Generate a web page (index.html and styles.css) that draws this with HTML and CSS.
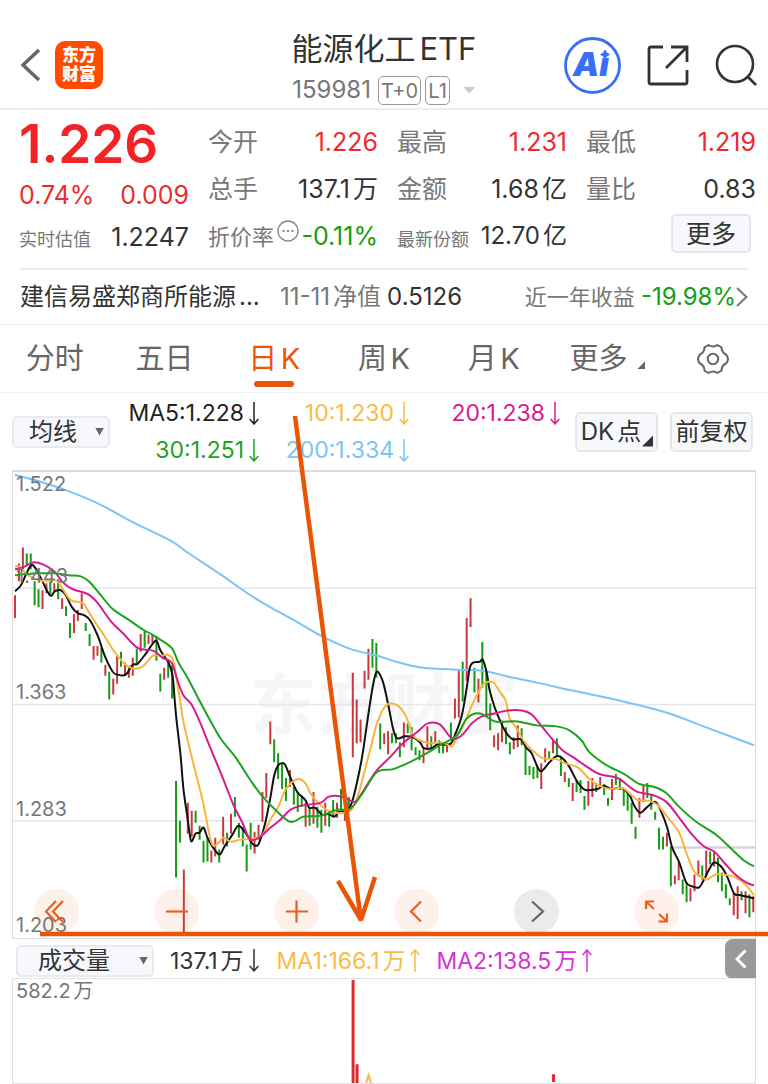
FILE: index.html
```html
<!DOCTYPE html>
<html lang="zh-CN">
<head>
  <meta charset="UTF-8" />
  <meta name="viewport" content="width=device-width, initial-scale=1" />
  <title>能源化工ETF 159981</title>
  <link rel="stylesheet" href="styles.css">
</head>
<body>
  <!-- Shared arrow shapes -->
  <svg class="defs" width="0" height="0" aria-hidden="true">
    <symbol id="down" viewBox="0 0 10 23"><path d="M5 0V22M0.700 17L5 22L9.300 17" /></symbol>
    <symbol id="up" viewBox="0 0 10 23"><path d="M5 23V1M0.700 6L5 1L9.300 6" /></symbol>
  </svg>

  <!-- Top bar -->
  <header class="topbar">
    <div class="topbar-left">
      <button class="icon-button" aria-label="返回">
        <svg width="20" height="34" viewBox="0 0 20 34"><path d="M18 2L2 17L18 32" fill="none" stroke="#666" stroke-width="3.500" /></svg>
      </button>
      <div class="logo"><span>东方</span><span>财富</span></div>
    </div>
    <div class="topbar-title">
      <h1>能源化工ETF</h1>
      <div class="code">
        <span>159981</span>
        <span class="badge">T+0</span>
        <span class="badge">L1</span>
        <i class="caret-light"></i>
      </div>
    </div>
    <div class="topbar-right">
      <button class="icon-button" aria-label="AI">
        <svg width="57" height="57" viewBox="0 0 57 57">
          <circle cx="28.500" cy="28.500" r="27" fill="#fff" stroke="#3a6df8" stroke-width="2.800" />
          <text class="ai-text" x="27" y="39" text-anchor="middle">Ai</text>
          <path d="M34.500 12H48V21H34.500Z" fill="#fff" />
          <path d="M41 13Q42 16.500 45.500 17.500Q42 18.500 41 22Q40 18.500 36.500 17.500Q40 16.500 41 13Z" fill="#3a6df8" stroke="#3a6df8" />
        </svg>
      </button>
      <button class="icon-button" aria-label="分享">
        <svg width="42" height="42" viewBox="0 0 42 42" fill="none" stroke="#333" stroke-width="2.800">
          <path d="M16 3H4Q2 3 2 5V38Q2 40 4 40H38Q40 40 40 38V26" />
          <path d="M24 3H40V18M39.500 3.500L19 24" />
        </svg>
      </button>
      <button class="icon-button" aria-label="搜索">
        <svg width="42" height="42" viewBox="0 0 42 42" fill="none" stroke="#333" stroke-width="2.600">
          <circle cx="20" cy="20" r="18" />
          <path d="M32 32L41 41" />
        </svg>
      </button>
    </div>
  </header>

  <!-- Quote -->
  <section class="quote">
    <div class="quote-col first">
      <div class="price">1.226</div>
      <div class="row change"><span class="num red">0.74%</span><span class="num red">0.009</span></div>
      <div class="row est"><span class="label small">实时估值</span><span class="num">1.2247</span></div>
    </div>
    <div class="quote-col">
      <div class="row"><span class="label">今开</span><span class="num red">1.226</span></div>
      <div class="row"><span class="label">总手</span><span class="num">137.1万</span></div>
      <div class="row">
        <span class="label medium">折价率</span>
        <svg class="info" width="22" height="22" viewBox="0 0 22 22"><circle cx="11" cy="11" r="10" fill="none" stroke="#888" stroke-width="1.400" /><path d="M5.500 11h2M10 11h2M14.500 11h2" stroke="#888" stroke-width="2" /></svg>
        <span class="num green">-0.11%</span>
      </div>
    </div>
    <div class="quote-col">
      <div class="row"><span class="label">最高</span><span class="num red">1.231</span></div>
      <div class="row"><span class="label">金额</span><span class="num">1.68亿</span></div>
      <div class="row"><span class="label small">最新份额</span><span class="num share">12.70亿</span></div>
    </div>
    <div class="quote-col">
      <div class="row"><span class="label">最低</span><span class="num red">1.219</span></div>
      <div class="row"><span class="label">量比</span><span class="num">0.83</span></div>
      <div class="row more-row"><button class="box-button more">更多</button></div>
    </div>
  </section>

  <!-- Linked fund -->
  <a class="fund" href="#">
    <span class="fund-name">建信易盛郑商所能源...</span>
    <span class="fund-label nav">11-11净值</span>
    <span class="fund-value">0.5126</span>
    <span class="fund-label year">近一年收益</span>
    <span class="fund-value green">-19.98%</span>
    <svg width="12" height="20" viewBox="0 0 12 20"><path d="M1 1L10.500 10L1 19" fill="none" stroke="#777" stroke-width="2" /></svg>
  </a>

  <!-- Period tabs -->
  <nav class="tabs">
    <a href="#">分时</a>
    <a href="#">五日</a>
    <a href="#" class="active">日K</a>
    <a href="#">周K</a>
    <a href="#">月K</a>
    <a href="#">更多<i class="corner"></i></a>
    <button class="icon-button" aria-label="设置">
      <svg width="34" height="32" viewBox="0 0 34 32" fill="none" stroke="#666" stroke-width="2">
        <path d="M12.500 2Q17 5 21.500 2L25.500 4.300Q25.500 9.500 30 11.500Q34 16 30 20.500Q25.500 22.500 25.500 27.700L21.500 30Q17 27 12.500 30L8.500 27.700Q8.500 22.500 4 20.500Q0 16 4 11.500Q8.500 9.500 8.500 4.300Z" stroke-linejoin="round" />
        <circle cx="17" cy="16" r="5.200" />
      </svg>
    </button>
  </nav>

  <section class="kline">
    <!-- Moving averages -->
    <div class="ma-bar">
      <label class="picker">
        <select aria-label="指标"><option>均线</option></select>
      </label>
      <div class="ma-list">
        <span class="ma5">MA5:1.228<svg class="arrow"><use href="#down" /></svg></span>
        <span class="ma10">10:1.230<svg class="arrow"><use href="#down" /></svg></span>
        <span class="ma20">20:1.238<svg class="arrow"><use href="#down" /></svg></span>
        <span class="ma30">30:1.251<svg class="arrow"><use href="#down" /></svg></span>
        <span class="ma200">200:1.334<svg class="arrow"><use href="#down" /></svg></span>
      </div>
      <button class="box-button tool dk">DK点<i class="corner"></i></button>
      <button class="box-button tool">前复权</button>
    </div>

    <!-- Daily chart -->
    <div class="chart">
      <div class="watermark">东方财富</div>
      <svg class="plot" viewBox="0 0 744 469" preserveAspectRatio="none">
        <path d="M0 117H744M0 234H744M0 351H744" stroke="#e6e6ee" stroke-width="1.500" />
        <path d="M660 378H744" stroke="#d3d3da" stroke-width="2.500" />
        <g id="plot-data"></g>
      </svg>
      <div class="axis">
        <div><span>1.522</span><span>1.443</span></div>
        <div><span>1.363</span></div>
        <div><span>1.283</span></div>
        <div><span>1.203</span></div>
      </div>
      <div class="controls">
        <button aria-label="最左"><svg viewBox="0 0 45 45"><path d="M22 12L12 22.500L22 33M29 12L19 22.500L29 33" /></svg></button>
        <button aria-label="缩小"><svg viewBox="0 0 45 45"><path d="M12 22.500H34" /></svg></button>
        <button aria-label="放大"><svg viewBox="0 0 45 45"><path d="M12 22.500H34M22.500 11.500V33.500" /></svg></button>
        <button aria-label="左移"><svg viewBox="0 0 45 45"><path d="M27 12.500L17 22.500L27 32.500" /></svg></button>
        <button class="off" aria-label="右移"><svg viewBox="0 0 45 45"><path d="M18 12.500L29 22.500L18 32.500" /></svg></button>
        <button aria-label="全屏"><svg viewBox="0 0 45 45"><path d="M12 20V12.500H20M12.500 13L20 20M24.500 32.500H33V24.500M32.500 32L25 25" /></svg></button>
      </div>
    </div>

    <!-- Hand-drawn marks over the chart -->
    <svg class="marks" viewBox="0 0 768 560" preserveAspectRatio="none">
      <path d="M295 23L361 528M338 488L361 527L375 484M40 541H768" />
    </svg>
  </section>

  <!-- Volume -->
  <section class="volume">
    <div class="volume-bar">
      <label class="picker wide">
        <select aria-label="副图指标"><option>成交量</option></select>
      </label>
      <span class="vol-now">137.1万<svg class="arrow"><use href="#down" /></svg></span>
      <span class="ma10">MA1:166.1万<svg class="arrow"><use href="#up" /></svg></span>
      <span class="vol-ma2">MA2:138.5万<svg class="arrow"><use href="#up" /></svg></span>
      <button class="fold" aria-label="展开">
        <svg width="12" height="20" viewBox="0 0 12 20"><path d="M10.500 1.500L2 10L10.500 18.500" fill="none" stroke="#fff" stroke-width="3" /></svg>
      </button>
    </div>
    <div class="volume-chart">
      <span>582.2万</span>
      <svg class="plot" viewBox="0 0 744 106" preserveAspectRatio="none">
        <path d="M341 1V106M345 87V106M542 97V105" stroke="#e02a2e" stroke-width="3" />
        <path d="M354 106L356.500 98L359 106" fill="none" stroke="#f7bc45" stroke-width="2" />
      </svg>
    </div>
  </section>

  <script src="chart.js"></script>
</body>
</html>
```
FILE: styles.css
```css
/* Base */
* {
  box-sizing: border-box;
}

body {
  margin: 0;
  background: #ffffff;
  color: #333333;
  font-family: Inter, "Noto Sans CJK SC", sans-serif;
  line-height: 30px;
  text-autospace: normal;
}

button {
  font-family: inherit;
  color: inherit;
  text-autospace: inherit;
  cursor: pointer;
}

a {
  color: inherit;
  text-decoration: none;
}

svg {
  display: block;
}

.defs {
  position: absolute;
}

.red {
  color: #ee2a2e;
}

.green {
  color: #12a012;
}

/* Top bar */
.topbar {
  display: grid;
  grid-template-columns: 1fr auto 1fr;
  height: 110px;
  padding: 20px 11px 0;
  border-bottom: 2px solid #eeeeee;
}

.icon-button {
  border: none;
  background: none;
  padding: 0;
}

.topbar-left,
.topbar-right {
  display: flex;
  align-items: center;
}

.topbar-left {
  gap: 14px;
  padding-left: 10px;
}

.topbar-right {
  justify-content: flex-end;
  gap: 26px;
}

.logo {
  display: flex;
  flex-direction: column;
  align-items: center;
  justify-content: center;
  width: 48px;
  height: 48px;
  border-radius: 10px;
  background: #ff4a00;
  color: #ffffff;
  font-size: 17px;
  font-weight: 900;
  line-height: 19px;
}

.ai-text {
  font-size: 33px;
  font-weight: 900;
  font-style: italic;
  fill: #3a6df8;
}

.topbar-title {
  display: flex;
  flex-direction: column;
  align-items: center;
  padding-top: 7px;
}

h1 {
  margin: 0;
  font-size: 31px;
  font-weight: 400;
  line-height: 43px;
}

.code {
  display: flex;
  align-items: center;
  gap: 4px;
  height: 40px;
  color: #777777;
  font-size: 24px;
}

.badge {
  height: 29px;
  padding: 0 2px;
  border: 1px solid #999999;
  border-radius: 5px;
  font-size: 20px;
  line-height: 28px;
}

.code .badge:nth-child(2) {
  margin-left: 3px;
}

.caret-light {
  width: 13px;
  height: 7px;
  margin-left: 9px;
  background: #cccccc;
  clip-path: polygon(0 0, 100% 0, 50% 100%);
}

/* Quote */
.quote {
  display: grid;
  grid-template-columns: repeat(4, minmax(0, 1fr));
  gap: 19px;
  padding: 8px 12px 9px 19px;
}

.row {
  display: flex;
  align-items: center;
  justify-content: space-between;
  height: 47px;
  white-space: nowrap;
}

.price {
  height: 53px;
  color: #f22226;
  font-size: 53px;
  font-weight: 600;
  line-height: 53px;
}

.first .est {
  height: 41px;
}

.est .num {
  padding-bottom: 4px;
}

.label {
  color: #777777;
  font-size: 25px;
}

.label.medium {
  padding-top: 2px;
  font-size: 22px;
}

.label.small {
  padding-top: 2px;
  font-size: 18px;
}

.quote-col:nth-child(3) .small {
  padding-top: 8px;
}

.num {
  font-size: 25px;
}

.num.share {
  font-size: 24px;
}

.info {
  margin: 0 0 10px;
}

.box-button {
  border: 2px solid #e4e6eb;
  border-radius: 5px;
  background: #f6f8fb;
  padding: 0;
  font-size: 24px;
}

.more-row {
  justify-content: flex-end;
  align-items: flex-start;
  padding: 2px 5px 0 0;
}

.more {
  width: 80px;
  height: 39px;
  font-size: 25px;
  line-height: 30px;
}

/* Linked fund */
.fund {
  display: flex;
  align-items: center;
  height: 56px;
  padding: 0 0 1px;
  margin: 0 20px;
  border-top: 2px solid #eeeeee;
  white-space: nowrap;
}

.fund-name {
  width: 260px;
  font-size: 24px;
}

.fund-label {
  margin-right: 6px;
  color: #777777;
  font-size: 22px;
}

.fund-label.nav {
  font-size: 24px;
}

.fund-value {
  font-size: 24px;
}

.year {
  margin-left: auto;
}

/* Period tabs */
.tabs {
  display: grid;
  grid-template-columns: repeat(7, 1fr);
  height: 69px;
  border-top: 1px solid #eeeeee;
  border-bottom: 1px solid #f2f2f2;
  color: #666666;
  font-size: 29px;
  line-height: 67px;
  text-align: center;
}

.tabs .icon-button {
  display: flex;
  align-items: center;
  justify-content: center;
}

.tabs .active {
  position: relative;
  color: #e8560a;
}

.tabs .active::after {
  content: "";
  position: absolute;
  left: 50%;
  bottom: 5px;
  width: 40px;
  height: 6px;
  margin-left: -20px;
  border-radius: 3px;
  background: #e8560a;
}

.corner {
  display: inline-block;
  width: 8px;
  height: 8px;
  margin-left: 10px;
  background: currentColor;
  clip-path: polygon(100% 0, 100% 100%, 0 100%);
}

.tabs .corner {
  margin-right: -8px;
}

/* Moving averages */
.kline {
  position: relative;
}

.ma-bar {
  display: flex;
  align-items: center;
  height: 77px;
  padding: 0 15px 0 12px;
}

.picker {
  position: relative;
  width: 98px;
  height: 32px;
}

.picker select {
  width: 100%;
  height: 100%;
  padding: 0 0 0 15px;
  border: 2px solid #e8eaee;
  border-radius: 5px;
  background: #f6f8fb;
  color: #333333;
  font-family: inherit;
  font-size: 24px;
  line-height: 28px;
  appearance: none;
}

.picker::after {
  content: "";
  position: absolute;
  right: 6px;
  top: 12px;
  width: 9px;
  height: 8px;
  background: #666666;
  clip-path: polygon(0 0, 100% 0, 50% 100%);
}

.ma-list {
  flex: 1;
  display: grid;
  grid-template-columns: 149fr 150fr 151fr;
  margin-right: 15px;
  font-size: 23px;
  line-height: 37px;
}

.ma-list span,
.volume-bar span {
  display: flex;
  align-items: center;
  justify-content: flex-end;
  gap: 5px;
  white-space: nowrap;
}

.arrow {
  width: 10px;
  height: 23px;
  fill: none;
  stroke: currentColor;
  stroke-width: 1.5px;
}

.ma5 {
  color: #222222;
}

.ma10 {
  color: #f7bc45;
}

.ma20 {
  color: #d81b8c;
}

.ma30 {
  color: #1ea31e;
}

.ma200 {
  color: #7cc4f5;
}

.tool {
  width: 83px;
  height: 40px;
  line-height: 30px;
}

.dk {
  position: relative;
  padding-right: 11px;
  margin-right: 12px;
}

.dk .corner {
  position: absolute;
  right: 3px;
  bottom: 3px;
  width: 11px;
  height: 11px;
}

/* Daily chart */
.chart {
  position: relative;
  height: 469px;
  margin: 0 12px;
  border: 1px solid #dcdce4;
  border-top-width: 2px;
}

.plot {
  position: absolute;
  left: 0;
  top: 0;
  width: 100%;
  height: 100%;
  fill: none;
}

.watermark {
  display: flex;
  align-items: center;
  justify-content: center;
  height: 100%;
  color: #f6f6f7;
  font-size: 67px;
  font-weight: 700;
}

.axis {
  position: absolute;
  inset: 0;
  display: grid;
  grid-template-rows: repeat(4, 1fr);
  padding-left: 3px;
  color: #777777;
  font-size: 20px;
  line-height: 25px;
}

.axis div {
  display: flex;
  flex-direction: column;
  justify-content: flex-end;
}

.axis div:first-child {
  justify-content: space-between;
}

.controls {
  position: absolute;
  left: 21px;
  right: 76px;
  bottom: 4px;
  display: flex;
  justify-content: space-between;
}

.controls button {
  width: 45px;
  height: 45px;
  padding: 0;
  border: none;
  border-radius: 50%;
  background: rgba(240, 90, 20, 0.09);
}

.controls path {
  fill: none;
  stroke: #e8611c;
  stroke-width: 2.2px;
}

.controls .off {
  background: rgba(0, 0, 0, 0.08);
}

.controls .off path {
  stroke: #666666;
}

.marks {
  position: absolute;
  left: 0;
  top: 0;
  width: 100%;
  height: 560px;
  fill: none;
  stroke: #ea5504;
  stroke-width: 4.5px;
  stroke-linejoin: bevel;
  pointer-events: none;
}

/* Volume */
.volume-bar {
  display: flex;
  align-items: center;
  height: 39px;
  padding: 4px 12px 0 16px;
  font-size: 23px;
}

.picker.wide {
  width: 138px;
}

.wide select {
  padding-left: 20px;
}

.volume-bar .vol-now {
  margin: 0 18px 0 16px;
}

.vol-ma2 {
  margin-left: 16px;
  color: #d631d6;
}

.fold {
  display: flex;
  align-items: center;
  justify-content: center;
  width: 31px;
  height: 40px;
  margin: -4px 0 0 auto;
  border: none;
  border-radius: 8px 0 0 8px;
  background: #999999;
}

.volume-chart {
  position: relative;
  height: 106px;
  margin: 0 12px;
  padding-left: 3px;
  border: 1px solid #e2e2e8;
  color: #777777;
  font-size: 20px;
  line-height: 25px;
}
```
FILE: chart.js
```js
// Each candle: r = up, g = down, then top and bottom of the bar
const candles = `
r124-147 r92-110 r76-98 g82-95 g82-98 g110-134 g118-136 r119-138 r112-122 g110-123
r112-120 g110-128 r127-138 g135-145 g152-167 r143-162 r139-150 r122-138 g152-160 g163-175
r175-189 r175-185 g177-192 r194-205 g201-229 r208-224 r185-213 g181-196 r192-204 r195-207
r187-205 g178-193 r163-181 g160-177 r164-173 r163-172 g165-190 g203-221 r197-209 g192-207
g195-228 g311-408 g351-373 r400-466 r333-364 r341-367 g341-353 g356-370 g371-393 g368-392
r381-393 r368-387 g380-393 r347-375 g363-377 r344-364 g327-347 g353-368 g357-377 g375-402
g353-380 r362-384 r355-370 r322-352 r303-328 r251-274 g269-292 g283-309 g293-319 g308-331
r300-317 g317-335 g322-342 g325-337 r333-357 g337-356 r322-354 g337-358 g340-363 r333-356
g343-357 g330-347 r333-348 g319-342 r333-351 g327-340 r202-287 r229-273 r249-272 r200-218
r178-209 g168-197 g172-207 g253-279 r263-274 r261-284 g263-273 g263-273 g272-287 r252-277
g253-263 g257-280 g277-285 g280-290 r277-293 r256-280 g266-278 r261-273 g270-283 g272-283
r273-282 g252-270 r228-248 r200-247 g191-231 r147-210 r127-156 g197-222 r208-232 g171-217
g200-245 g233-260 r265-277 r263-280 r250-272 g257-274 g272-284 r267-279 r255-277 g258-275
g277-305 g296-305 g297-309 g297-308 r293-319 r278-292 g281-289 r270-283 g268-287 g287-306
r302-312 g308-317 r313-331 g310-322 g310-323 g326-340 r311-336 r308-327 g313-322 r307-317
g314-325 g328-336 r309-330 g304-315 g308-320 g318-336 g323-341 g333-354 g357-369 r328-348
r316-332 g313-328 g324-340 g342-350 g358-380 g367-380 r363-377 g377-417 r406-415 r393-411
g410-425 g413-433 r419-432 r405-422 r391-407 g396-410 r381-407 g382-395 r382-397 g388-413
g403-422 g415-429 g429-436 r424-446 r417-450 g422-431 r422-444 g425-448 r427-443`;

const lines = [
  { color: '#7cc4f5', points: '2,3 25,9 55,19 88,33 121,51 158,69 175,81 208,103 238,124 258,136 285,151 311,166 338,178 365,185 388,192 411,197 445,199 471,200 497,206 530,213 561,220 608,230 655,242 695,257 743,275' },
  { color: '#111111', points: '2,120 8,114 13,103 18,94 22,96 28,107 37,124 42,120 48,119 53,124 59,136 65,142 71,144 77,149 85,165 92,185 100,201 105,204 113,204 120,194 125,193 133,183 140,173 144,170 148,180 156,192 160,205 162,228 164,250 168,285 171,320 175,348 177,363 179,372 183,364 187,363 191,358 195,368 200,377 207,385 212,377 220,365 226,356 233,363 240,374 245,376 248,370 253,353 258,328 262,305 266,295 270,293 273,295 278,307 285,322 293,330 297,338 303,338 310,345 316,344 322,347 327,342 335,341 340,332 345,312 350,287 355,253 360,220 364,202 368,204 372,215 377,238 381,258 385,268 393,266 401,267 408,272 412,278 420,278 426,274 438,274 443,265 450,245 455,217 458,197 461,192 468,191 471,189 475,202 478,220 483,237 490,254 495,263 501,269 509,269 515,278 520,283 526,297 530,301 538,292 545,286 551,288 558,297 566,312 574,320 586,319 593,316 600,319 610,318 618,325 623,336 629,343 635,338 644,332 650,342 656,358 661,378 668,393 675,413 681,417 688,418 693,410 698,400 703,393 710,397 716,407 723,424 730,426 743,429' },
  { color: '#f7b53c', points: '2,95 6,95 13,102 21,107 30,110 43,109 50,118 58,129 70,132 76,141 85,155 93,167 101,180 113,194 123,198 131,195 140,185 148,185 155,184 160,188 163,202 168,233 171,252 180,290 190,330 199,373 206,373 211,368 218,372 228,370 240,369 250,365 258,350 266,337 273,320 279,313 286,309 293,313 298,323 305,332 313,339 323,343 338,341 345,328 351,307 358,280 365,253 373,236 380,233 388,237 395,248 401,265 408,270 418,273 430,272 440,276 445,267 453,252 460,235 466,223 471,214 476,211 482,212 488,221 494,230 498,248 505,258 513,272 523,282 531,288 545,289 553,293 566,297 576,307 586,315 598,319 611,318 620,325 626,330 638,331 646,335 656,347 668,363 675,383 683,402 690,407 696,410 705,405 718,406 728,410 736,417 743,426' },
  { color: '#d81b8c', points: '2,98 10,96 20,91 30,93 41,100 51,112 60,118 75,123 85,132 98,150 111,163 125,177 141,180 150,187 159,192 165,210 171,225 179,234 188,253 198,278 210,307 221,335 230,353 238,370 248,367 258,358 268,350 278,340 288,336 308,333 316,327 326,326 335,329 343,332 350,323 358,310 365,300 378,287 391,273 405,262 416,253 428,254 440,268 450,265 460,253 470,246 483,243 496,240 510,240 520,244 531,257 540,268 551,280 563,288 576,297 588,304 606,308 616,315 626,322 641,325 655,332 668,348 681,365 693,377 703,382 713,393 723,404 735,413 743,416' },
  { color: '#1ea31e', points: '2,104 11,103 25,102 43,102 56,104 68,105 76,110 88,124 100,138 115,148 131,159 145,167 159,177 166,192 175,207 188,232 195,245 208,268 223,287 238,310 248,324 261,338 278,352 291,347 308,346 325,340 338,339 350,324 365,302 381,299 398,292 415,283 428,275 445,265 455,248 468,243 483,251 497,251 506,251 525,255 545,256 558,260 570,270 578,282 595,295 613,304 628,314 643,317 655,323 668,337 685,352 705,365 721,380 733,391 743,397' }
];

const step = 3.938;
const plot = document.getElementById('plot-data');

function addPath(d, color, width) {
  const path = document.createElementNS('http://www.w3.org/2000/svg', 'path');
  path.setAttribute('d', d);
  path.setAttribute('stroke', color);
  path.setAttribute('stroke-width', width);
  plot.appendChild(path);
}

// Smooth curve through all the points
function curve(text) {
  const p = text.split(' ').map(pair => pair.split(',').map(Number));
  let d = `M${p[0]}`;
  for (let i = 0; i < p.length - 1; i++) {
    const a = p[i - 1] || p[i];
    const b = p[i];
    const c = p[i + 1];
    const e = p[i + 2] || c;
    d += `C${b[0] + (c[0] - a[0]) / 6},${b[1] + (c[1] - a[1]) / 6} ${c[0] - (e[0] - b[0]) / 6},${c[1] - (e[1] - b[1]) / 6} ${c}`;
  }
  return d;
}

let up = '';
let down = '';
candles.trim().split(/\s+/).forEach((candle, i) => {
  const [top, bottom] = candle.slice(1).split('-');
  const bar = `M${(2 + i * step).toFixed(1)} ${top}V${bottom}`;
  if (candle[0] === 'r') {
    up += bar;
  } else {
    down += bar;
  }
});

addPath(up, '#c9383c', 2);
addPath(down, '#159a15', 2);
lines.forEach(line => addPath(curve(line.points), line.color, 2));
```
